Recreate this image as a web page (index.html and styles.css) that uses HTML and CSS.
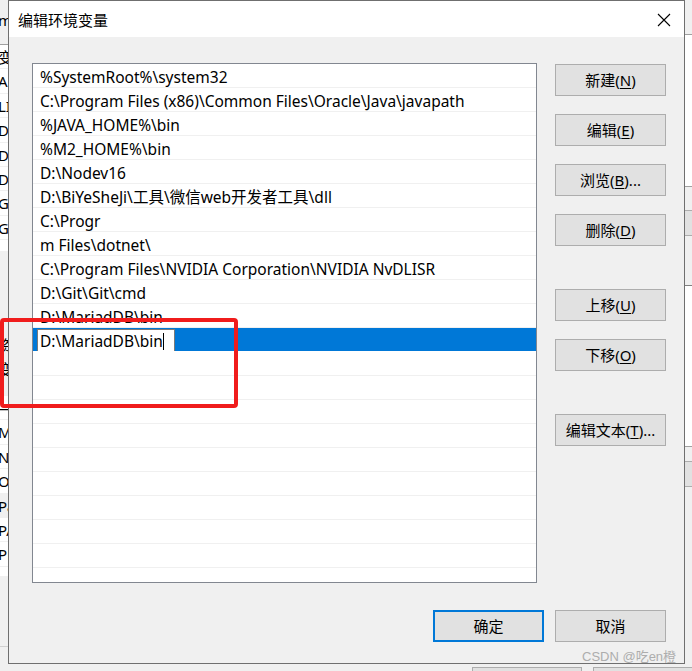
FILE: index.html
```html
<!DOCTYPE html>
<html>
<head>
<meta charset="utf-8">
<link rel="stylesheet" href="styles.css">
</head>
<body>
<div class="desktop">
  <div class="back-left">
    <div class="bl-head"><span class="bl-t">m</span></div>
    <div class="bl-white">
      <div class="bl-row"><span class="bl-t">变</span></div>
      <div class="bl-row"><span class="bl-t">AP</span></div>
      <div class="bl-row"><span class="bl-t">LI</span></div>
      <div class="bl-row"><span class="bl-t">DA</span></div>
      <div class="bl-row"><span class="bl-t">DA</span></div>
      <div class="bl-row"><span class="bl-t">DE</span></div>
      <div class="bl-row"><span class="bl-t">GA</span></div>
      <div class="bl-row"><span class="bl-t">GO</span></div>
    </div>
    <div class="bl-grey">
      <div class="bl-row"><span class="bl-t">资</span></div>
      <div class="bl-row"><span class="bl-t">变</span></div>
    </div>
    <div class="bl-white2">
      <div class="bl-row"><span class="bl-t">—</span></div>
      <div class="bl-row"><span class="bl-t">MA</span></div>
      <div class="bl-row"><span class="bl-t">NU</span></div>
      <div class="bl-row"><span class="bl-t">OS</span></div>
      <div class="bl-row sel"><span class="bl-t">Pa</span></div>
      <div class="bl-row"><span class="bl-t">PA</span></div>
      <div class="bl-row"><span class="bl-t">PH</span></div>
    </div>
    <div class="bl-foot"></div>
  </div>

  <div class="back-right">
    <div class="br-head"></div>
    <div class="br-list1"></div>
    <div class="br-btnarea"><div class="br-btn"></div></div>
    <div class="br-list2"></div>
    <div class="br-btnarea2"><div class="br-btn"></div></div>
  </div>

  <div class="back-bottom">
    <span class="bb-btn"></span>
    <span class="bb-btn"></span>
  </div>

  <div class="dialog">
    <div class="titlebar">
      <span class="title">编辑环境变量</span>
      <svg class="close" width="14" height="14" viewBox="0 0 14 14">
        <path d="M1 1 L13 13 M13 1 L1 13" stroke="#000" stroke-width="1.1" fill="none"/>
      </svg>
    </div>
    <div class="body">
      <div class="main">
        <div class="list">
          <div class="row">%SystemRoot%\system32</div>
          <div class="row">C:\Program Files (x86)\Common Files\Oracle\Java\javapath</div>
          <div class="row">%JAVA_HOME%\bin</div>
          <div class="row">%M2_HOME%\bin</div>
          <div class="row">D:\Nodev16</div>
          <div class="row">D:\BiYeSheJi\工具\微信web开发者工具\dll</div>
          <div class="row">C:\Progr</div>
          <div class="row">m Files\dotnet\</div>
          <div class="row">C:\Program Files\NVIDIA Corporation\NVIDIA NvDLISR</div>
          <div class="row">D:\Git\Git\cmd</div>
          <div class="row">D:\MariadDB\bin</div>
          <div class="row selected"><span class="edit">D:\MariadDB\bin<span class="caret"></span></span></div>
          <div class="row"></div>
          <div class="row"></div>
          <div class="row"></div>
          <div class="row"></div>
          <div class="row"></div>
          <div class="row"></div>
          <div class="row"></div>
          <div class="row"></div>
          <div class="row"></div>
          <div class="row"></div>
        </div>
        <div class="side">
          <div class="group">
            <button class="btn">新建(<u>N</u>)</button>
            <button class="btn">编辑(<u>E</u>)</button>
            <button class="btn">浏览(<u>B</u>)...</button>
            <button class="btn">删除(<u>D</u>)</button>
          </div>
          <div class="group">
            <button class="btn">上移(<u>U</u>)</button>
            <button class="btn">下移(<u>O</u>)</button>
          </div>
          <div class="group">
            <button class="btn">编辑文本(<u>T</u>)...</button>
          </div>
        </div>
      </div>
      <div class="footer">
        <button class="btn default">确定</button>
        <button class="btn">取消</button>
      </div>
    </div>
  </div>

  <div class="redbox"></div>
  <div class="watermark">CSDN @吃en橙</div>
</div>
</body>
</html>
```

FILE: styles.css
```css
* { box-sizing: border-box; }
html, body {
  margin: 0;
  padding: 0;
  width: 692px;
  height: 671px;
  overflow: hidden;
}
body {
  font-family: "Noto Sans", "Noto Sans CJK SC", sans-serif;
  font-size: 15px;
  color: #000;
  background: #f0f0f0;
}
.desktop {
  position: relative;
  width: 692px;
  height: 671px;
  background: #f0f0f0;
  overflow: hidden;
}

/* background window, left strip */
.back-left {
  position: absolute;
  left: 0;
  top: 0;
  width: 9px;
  height: 671px;
  overflow: hidden;
  display: flex;
  flex-direction: column;
}
.bl-t {
  display: block;
  white-space: nowrap;
  margin-left: -2px;
  line-height: 24px;
}
.bl-head {
  height: 45px;
  background: #f0f0f0;
  border-bottom: 1px solid #a0a0a0;
  padding-top: 8px;
}
.bl-white {
  background: #fff;
  height: 206px;
}
.bl-row {
  height: 24.4px;
  border-bottom: 1px solid #f0f0f0;
}
.bl-grey {
  background: #f0f0f0;
  height: 145px;
  padding-top: 82px;
}
.bl-white2 {
  background: #fff;
  height: 180px;
}
.bl-row.sel { background: #f0f0f0; }
.bl-foot {
  flex: 1;
  background: #f0f0f0;
}
.bl-foot::after {
  content: "";
  display: block;
  margin-top: 70px;
  border-top: 1px solid #d0d0d0;
}

/* background window, right strip */
.back-right {
  position: absolute;
  right: 0;
  top: 0;
  width: 8px;
  height: 671px;
  display: flex;
  flex-direction: column;
}
.br-head {
  height: 35px;
  border-bottom: 1px solid #a0a0a0;
  background: #f0f0f0;
}
.br-list1 {
  height: 152px;
  background: #fff;
  border-bottom: 1px solid #a0a0a0;
  border-left: 1px solid #e0e0e0;
}
.br-btnarea {
  height: 99px;
  padding-top: 23px;
  background: #f0f0f0;
  border-bottom: 1px solid #808080;
}
.br-btn {
  height: 26px;
  background: #e1e1e1;
  border-top: 1px solid #adadad;
  border-bottom: 1px solid #adadad;
}
.br-list2 {
  height: 161px;
  background: #fff;
  border-bottom: 1px solid #a0a0a0;
  border-left: 1px solid #e0e0e0;
}
.br-btnarea2 {
  flex: 1;
  padding-top: 14px;
  background: #f0f0f0;
}

.back-bottom {
  position: absolute;
  left: 472px;
  top: 667px;
  display: flex;
  gap: 11px;
}
.bb-btn {
  display: block;
  width: 110px;
  height: 20px;
  background: #e1e1e1;
  border: 1px solid #adadad;
}

/* dialog */
.dialog {
  position: absolute;
  left: 8px;
  top: 0;
  width: 677px;
  height: 664px;
  border: 1px solid #6f6f6f;
  background: #f0f0f0;
  display: flex;
  flex-direction: column;
}
.titlebar {
  height: 36px;
  background: #fff;
  display: flex;
  align-items: center;
  justify-content: space-between;
  padding: 0 13px 0 9px;
  flex: none;
}
.title {
  font-family: "Noto Sans CJK SC", sans-serif;
  font-size: 15px;
}
.close { display: block; margin-top: 1px; }

.body {
  flex: 1;
  display: flex;
  flex-direction: column;
  padding: 26px 17px 21px 23px;
}
.main {
  display: flex;
  gap: 18px;
}
.list {
  width: 505px;
  height: 520px;
  background: #fff;
  border: 1px solid #828790;
  overflow: hidden;
  flex: none;
}
.row {
  height: 24px;
  line-height: 26px;
  font-size: 15.5px;
  border-bottom: 1px solid #f0f0f0;
  padding-left: 7px;
  white-space: nowrap;
  overflow: hidden;
}
.row.selected {
  background: #0078d7;
  padding-left: 4px;
  padding-top: 1px;
  border-bottom-color: #fff;
  line-height: 20px;
}
.edit {
  display: inline-block;
  width: 138px;
  height: 23px;
  background: #fff;
  border: 1px solid #7a7a7a;
  padding-left: 2px;
  line-height: 22px;
  color: #000;
}
.caret {
  display: inline-block;
  width: 1px;
  height: 17px;
  background: #000;
  vertical-align: -3px;
}

.side {
  display: flex;
  flex-direction: column;
  gap: 43px;
  padding-top: 1px;
}
.group {
  display: flex;
  flex-direction: column;
  gap: 18px;
}
.btn {
  width: 111px;
  height: 32px;
  background: #e1e1e1;
  border: 1px solid #adadad;
  font-family: "Noto Sans", "Noto Sans CJK SC", sans-serif;
  font-size: 15px;
  color: #000;
  padding: 0;
  margin: 0;
  line-height: 28px;
}
.btn u { text-decoration-thickness: 1px; text-underline-offset: 2px; }
.btn.default {
  border: 2px solid #0078d7;
}

.footer {
  margin-top: auto;
  margin-right: 1px;
  display: flex;
  justify-content: flex-end;
  gap: 11px;
}

.redbox {
  position: absolute;
  left: 0;
  top: 318px;
  width: 238px;
  height: 90px;
  border: 4px solid #f01c1c;
  border-radius: 4px;
}

.watermark {
  position: absolute;
  left: 582px;
  top: 646px;
  font-family: "Liberation Sans", "Noto Sans CJK SC", sans-serif;
  font-size: 13px;
  color: #adadad;
  white-space: nowrap;
}
```
